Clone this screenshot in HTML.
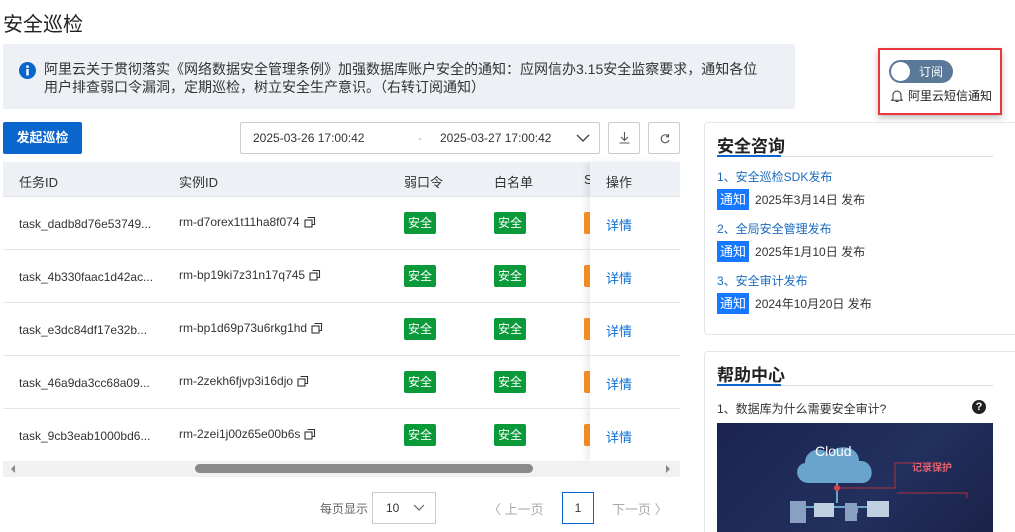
<!DOCTYPE html>
<html><head><meta charset="utf-8"><style>
*{box-sizing:border-box;margin:0;padding:0}
html,body{width:1015px;height:532px;overflow:hidden}
body{background:#fff;font-family:"Liberation Sans","Noto Sans CJK SC",sans-serif;font-size:12px;color:#333;position:relative}
.a{position:absolute}
.badge{position:absolute;width:32px;height:22px;background:#0a9a3a;color:#fff;font-size:12px;line-height:22px;text-align:center;border-radius:2px}
.or{position:absolute;width:6px;height:22px;background:#f08a24;border-radius:2px 0 0 2px}
.link{color:#0a6fd6}
.hl{position:absolute;left:3px;width:677px;height:1px;background:#e3e5e8}
.tag{display:inline-block;background:#1677ff;color:#fff;padding:0 3px;height:21px;line-height:21px;margin-right:6px;font-size:13px}
.cp{display:inline-block;vertical-align:-2px;margin-left:4px}
</style></head><body>
<div class="a" style="left:3px;top:8px;font-size:20px;color:#222">安全巡检</div>
<div class="a" style="left:3px;top:44px;width:792px;height:65px;background:#edf0f5;border-radius:2px"></div>
<svg class="a" style="left:19px;top:62px" width="17" height="17" viewBox="0 0 17 17"><circle cx="8.5" cy="8.5" r="8.5" fill="#0a66cc"/><rect x="7.3" y="7" width="2.4" height="6.5" fill="#fff"/><circle cx="8.5" cy="4.6" r="1.4" fill="#fff"/></svg>
<div class="a" style="left:44px;top:60px;font-size:14px;line-height:18px;color:#333;width:750px">阿里云关于贯彻落实《网络数据安全管理条例》加强数据库账户安全的通知：应网信办3.15安全监察要求，通知各位<br>用户排查弱口令漏洞，定期巡检，树立安全生产意识。（右转订阅通知）</div>
<div class="a" style="left:878px;top:48px;width:124px;height:67px;border:2px solid #e8383d;box-shadow:0 3px 6px rgba(0,0,0,.25)"></div>
<div class="a" style="left:889px;top:60px;width:64px;height:23px;background:#5a7898;border-radius:12px"><div class="a" style="left:2px;top:2px;width:19px;height:19px;background:#fff;border-radius:50%"></div><div class="a" style="left:30px;top:3px;color:#fff;font-size:12px">订阅</div></div>
<svg class="a" style="left:891px;top:89px" width="12" height="14" viewBox="0 0 12 14"><path d="M2 10V6a4 4 0 0 1 8 0v4l1.2 1.2H.8z M4.5 12.5h3" fill="none" stroke="#333" stroke-width="1"/></svg>
<div class="a" style="left:908px;top:87px;font-size:12px;color:#222">阿里云短信通知</div>
<div class="a" style="left:3px;top:122px;width:79px;height:32px;background:#0a66cc;border-radius:2px;color:#fff;font-weight:bold;font-size:13px;line-height:32px;text-align:center">发起巡检</div>
<div class="a" style="left:240px;top:122px;width:360px;height:32px;border:1px solid #ccc;border-radius:2px"><span class="a" style="left:12px;top:8px;font-size:12px">2025-03-26 17:00:42</span><span class="a" style="left:177px;top:8px;color:#aaa">-</span><span class="a" style="left:199px;top:8px;font-size:12px">2025-03-27 17:00:42</span>
<svg class="a" style="left:335px;top:11px" width="14" height="9" viewBox="0 0 14 9"><path d="M1 1l6 6 6-6" fill="none" stroke="#444" stroke-width="1.4"/></svg></div>
<div class="a" style="left:608px;top:122px;width:32px;height:32px;border:1px solid #ccc;border-radius:2px"><svg class="a" style="left:9px;top:8px" width="13" height="14" viewBox="0 0 13 14"><path d="M6.5 1v8M3 6l3.5 3.5L10 6M1.5 12h10" fill="none" stroke="#555" stroke-width="1.1"/></svg></div>
<div class="a" style="left:648px;top:122px;width:32px;height:32px;border:1px solid #ccc;border-radius:2px"><svg class="a" style="left:10px;top:10px" width="12" height="12" viewBox="0 0 12 12"><path d="M9.5 3.5A4 4 0 1 0 10 7M9.5 1v2.8H6.8" fill="none" stroke="#555" stroke-width="1.1"/></svg></div>
<!-- table -->
<div class="a" style="left:3px;top:162px;width:677px;height:35px;background:#edf0f5"></div>
<div class="a" style="left:19px;top:172px;font-size:13px">任务ID</div>
<div class="a" style="left:179px;top:172px;font-size:13px">实例ID</div>
<div class="a" style="left:404px;top:172px;font-size:13px">弱口令</div>
<div class="a" style="left:494px;top:172px;font-size:13px">白名单</div>
<div class="a" style="left:584px;top:172px;font-size:13px">S</div>
<div class="a" style="left:590px;top:162px;width:90px;height:299px;background:#fff;box-shadow:-4px 0 6px rgba(0,0,0,.08)"></div>
<div class="a" style="left:590px;top:162px;width:90px;height:35px;background:#edf0f5"></div>
<div class="a" style="left:606px;top:172px;font-size:13px">操作</div>
<div class="hl" style="top:196px"></div><div class="hl" style="top:249px"></div><div class="hl" style="top:302px"></div><div class="hl" style="top:355px"></div><div class="hl" style="top:408px"></div><div class="hl" style="top:461px"></div>
<svg width="0" height="0" style="position:absolute"><defs><g id="cp"><path d="M3.5 1.5h7v7h-2" fill="none" stroke="#333" stroke-width="1.1"/><rect x="1" y="4" width="7" height="7" fill="none" stroke="#333" stroke-width="1.1"/></g></defs></svg>
<div class="a" style="left:19px;top:216px;font-size:12px;line-height:16px">task_dadb8d76e53749...</div>
<div class="a" style="left:179px;top:214px;font-size:12px;line-height:16px">rm-d7orex1t11ha8f074<svg class="cp" width="12" height="12"><use href="#cp"/></svg></div>
<div class="a" style="left:19px;top:269px;font-size:12px;line-height:16px">task_4b330faac1d42ac...</div>
<div class="a" style="left:179px;top:267px;font-size:12px;line-height:16px">rm-bp19ki7z31n17q745<svg class="cp" width="12" height="12"><use href="#cp"/></svg></div>
<div class="a" style="left:19px;top:322px;font-size:12px;line-height:16px">task_e3dc84df17e32b...</div>
<div class="a" style="left:179px;top:320px;font-size:12px;line-height:16px">rm-bp1d69p73u6rkg1hd<svg class="cp" width="12" height="12"><use href="#cp"/></svg></div>
<div class="a" style="left:19px;top:375px;font-size:12px;line-height:16px">task_46a9da3cc68a09...</div>
<div class="a" style="left:179px;top:373px;font-size:12px;line-height:16px">rm-2zekh6fjvp3i16djo<svg class="cp" width="12" height="12"><use href="#cp"/></svg></div>
<div class="a" style="left:19px;top:428px;font-size:12px;line-height:16px">task_9cb3eab1000bd6...</div>
<div class="a" style="left:179px;top:426px;font-size:12px;line-height:16px">rm-2zei1j00z65e00b6s<svg class="cp" width="12" height="12"><use href="#cp"/></svg></div>
<div class="badge" style="left:404px;top:212px">安全</div><div class="badge" style="left:494px;top:212px">安全</div><div class="or" style="left:584px;top:212px"></div>
<div class="badge" style="left:404px;top:265px">安全</div><div class="badge" style="left:494px;top:265px">安全</div><div class="or" style="left:584px;top:265px"></div>
<div class="badge" style="left:404px;top:318px">安全</div><div class="badge" style="left:494px;top:318px">安全</div><div class="or" style="left:584px;top:318px"></div>
<div class="badge" style="left:404px;top:371px">安全</div><div class="badge" style="left:494px;top:371px">安全</div><div class="or" style="left:584px;top:371px"></div>
<div class="badge" style="left:404px;top:424px">安全</div><div class="badge" style="left:494px;top:424px">安全</div><div class="or" style="left:584px;top:424px"></div>
<div class="a link" style="left:606px;top:215px;font-size:13px">详情</div>
<div class="a link" style="left:606px;top:268px;font-size:13px">详情</div>
<div class="a link" style="left:606px;top:321px;font-size:13px">详情</div>
<div class="a link" style="left:606px;top:374px;font-size:13px">详情</div>
<div class="a link" style="left:606px;top:427px;font-size:13px">详情</div>
<div class="a" style="left:3px;top:461px;width:677px;height:16px;background:#f1f1f1"></div>
<div class="a" style="left:11px;top:465px;width:0;height:0;border-top:4px solid transparent;border-bottom:4px solid transparent;border-right:4px solid #888"></div>
<div class="a" style="left:666px;top:465px;width:0;height:0;border-top:4px solid transparent;border-bottom:4px solid transparent;border-left:4px solid #888"></div>
<div class="a" style="left:195px;top:464px;width:338px;height:9px;background:#8a8a8a;border-radius:5px"></div>
<!-- pagination -->
<div class="a" style="left:320px;top:500px;font-size:12px;color:#666">每页显示</div>
<div class="a" style="left:372px;top:492px;width:64px;height:32px;border:1px solid #ccc"><span class="a" style="left:13px;top:8px;font-size:12px">10</span><svg class="a" style="left:40px;top:11px" width="12" height="8" viewBox="0 0 12 8"><path d="M1 1l5 5 5-5" fill="none" stroke="#666" stroke-width="1.2"/></svg></div>
<div class="a" style="left:488px;top:499px;font-size:13px;color:#aaa">〈 上一页</div>
<div class="a" style="left:562px;top:492px;width:32px;height:32px;border:1px solid #0a66cc;text-align:center;line-height:30px;font-size:12px">1</div>
<div class="a" style="left:612px;top:499px;font-size:13px;color:#aaa">下一页 〉</div>
<!-- right cards -->
<div class="a" style="left:704px;top:122px;width:330px;height:213px;border:1px solid #e3e5e8;border-radius:4px"></div>
<div class="a" style="left:717px;top:132px;font-size:17px;font-weight:bold;color:#222">安全咨询</div>
<div class="a" style="left:717px;top:156px;width:276px;height:1px;background:#ddd"></div>
<div class="a" style="left:717px;top:155px;width:64px;height:2px;background:#0a66cc"></div>
<div class="a link" style="left:717px;top:168px;font-size:12px;color:#1a6bbf">1、安全巡检SDK发布</div>
<div class="a" style="left:717px;top:189px;font-size:12px"><span class="tag">通知</span>2025年3月14日 发布</div>
<div class="a link" style="left:717px;top:220px;font-size:12px;color:#1a6bbf">2、全局安全管理发布</div>
<div class="a" style="left:717px;top:241px;font-size:12px"><span class="tag">通知</span>2025年1月10日 发布</div>
<div class="a link" style="left:717px;top:272px;font-size:12px;color:#1a6bbf">3、安全审计发布</div>
<div class="a" style="left:717px;top:293px;font-size:12px"><span class="tag">通知</span>2024年10月20日 发布</div>
<div class="a" style="left:704px;top:351px;width:330px;height:200px;border:1px solid #e3e5e8;border-radius:4px"></div>
<div class="a" style="left:717px;top:361px;font-size:17px;font-weight:bold;color:#222">帮助中心</div>
<div class="a" style="left:717px;top:385px;width:276px;height:1px;background:#ddd"></div>
<div class="a" style="left:717px;top:384px;width:64px;height:2px;background:#0a66cc"></div>
<div class="a" style="left:717px;top:400px;font-size:12px">1、数据库为什么需要安全审计?</div>
<div class="a" style="left:972px;top:400px;width:14px;height:14px;border-radius:50%;background:#222;color:#fff;font-size:11px;font-weight:bold;text-align:center;line-height:14px">?</div>
<div class="a" style="left:717px;top:423px;width:276px;height:109px;background:linear-gradient(135deg,#1b2450,#22305e 60%,#1a2248);overflow:hidden">
<svg width="276" height="109" viewBox="0 0 276 109">
<path d="M92 60c-14 0-16-18-4-20 0-14 18-18 24-8 6-12 30-10 30 6 14-2 18 20 4 22z" fill="#6aa4cc"/>
<text x="98" y="33" font-family="Liberation Sans" font-size="14" fill="#fff">Cloud</text>
<path d="M120 60v20M80 90v-6h80v6M100 90v-6M140 90v-6" stroke="#6aa4cc" stroke-width="2" fill="none"/>
<circle cx="120" cy="65" r="3" fill="#e04050"/>
<path d="M123 65h55v-25h45v5M180 70h70v5" stroke="#b03040" stroke-width="1" fill="none"/>
<text x="195" y="48" font-family="Noto Sans CJK SC" font-size="10" font-weight="bold" fill="#e06070">记录保护</text>
<rect x="73" y="78" width="16" height="22" fill="#8aa0c0"/><rect x="97" y="80" width="20" height="14" fill="#c0d0e0"/><rect x="128" y="80" width="12" height="18" fill="#8aa0c0"/><rect x="150" y="78" width="22" height="16" fill="#c0d0e0"/>
</svg></div>
</body></html>
